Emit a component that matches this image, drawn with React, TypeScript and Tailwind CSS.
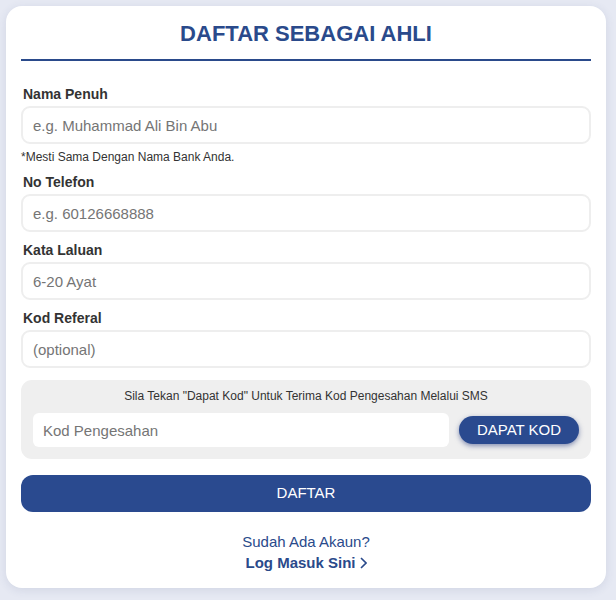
const Field = ({ label, placeholder, type = 'text' }: { label: string; placeholder: string; type?: string }) => (
  <div>
    <label className="mb-[4px] block pl-[2px] text-[14px] font-bold leading-[16px] text-[#333]">{label}</label>
    <input
      type={type}
      placeholder={placeholder}
      className="h-[38px] w-full rounded-[9px] border-2 border-[#eeeeee] bg-white px-[10px] text-[15px] text-[#333] outline-none placeholder:text-[#757575]"
    />
  </div>
);

export default function App() {
  return (
    <div
      className="min-h-[600px] bg-[#e6e9f3] pt-[6px] pr-[10px] pb-[11px] pl-[6px]"
      style={{ fontFamily: '"Liberation Sans", Arial, sans-serif' }}
    >
      <div className="rounded-[16px] bg-white px-[15px] pt-[15px] pb-[15px] shadow-[0_2px_10px_rgba(60,70,120,0.12)]">
        <h1 className="text-center text-[22px] font-bold leading-[26px] text-[#2a4a8b]">DAFTAR SEBAGAI AHLI</h1>
        <div className="mt-[12px] h-[2px] bg-[#2a4a8b]" />

        <div className="mt-[25px]">
          <Field label="Nama Penuh" placeholder="e.g. Muhammad Ali Bin Abu" />
          <p className="mt-[6px] text-[12px] leading-[14px] text-[#333]">*Mesti Sama Dengan Nama Bank Anda.</p>
        </div>

        <div className="mt-[10px] flex flex-col gap-[10px]">
          <Field label="No Telefon" placeholder="e.g. 60126668888" type="tel" />
          <Field label="Kata Laluan" placeholder="6-20 Ayat" type="password" />
          <Field label="Kod Referal" placeholder="(optional)" />
        </div>

        <div className="mt-[12px] rounded-[11px] bg-[#efefef] px-[12px] pt-[9px] pb-[12px]">
          <p className="text-center text-[12px] leading-[14px] text-[#333]">
            Sila Tekan "Dapat Kod" Untuk Terima Kod Pengesahan Melalui SMS
          </p>
          <div className="mt-[10px] flex items-center gap-[10px]">
            <input
              placeholder="Kod Pengesahan"
              className="h-[34px] flex-1 rounded-[6px] bg-white px-[10px] text-[15px] text-[#333] outline-none placeholder:text-[#757575]"
            />
            <button className="h-[28px] w-[120px] rounded-full bg-[#2a4a8f] text-[15px] text-white shadow-[0_2px_5px_rgba(30,50,120,0.5)]">
              DAPAT KOD
            </button>
          </div>
        </div>

        <button className="mt-[16px] h-[37px] w-full rounded-[12px] bg-[#2a4a8f] text-[15px] text-white">DAFTAR</button>

        <div className="mt-[20px] text-center text-[15px] leading-[20px] text-[#2a4a8b]">
          <p>Sudah Ada Akaun?</p>
          <p className="mt-[1px] inline-flex items-center gap-[4px] font-bold">
            Log Masuk Sini
            <svg width="7" height="12" viewBox="0 0 7 12" fill="none" stroke="currentColor" strokeWidth="1.6">
              <path d="M1 1l5 5-5 5" />
            </svg>
          </p>
        </div>
      </div>
    </div>
  );
}
